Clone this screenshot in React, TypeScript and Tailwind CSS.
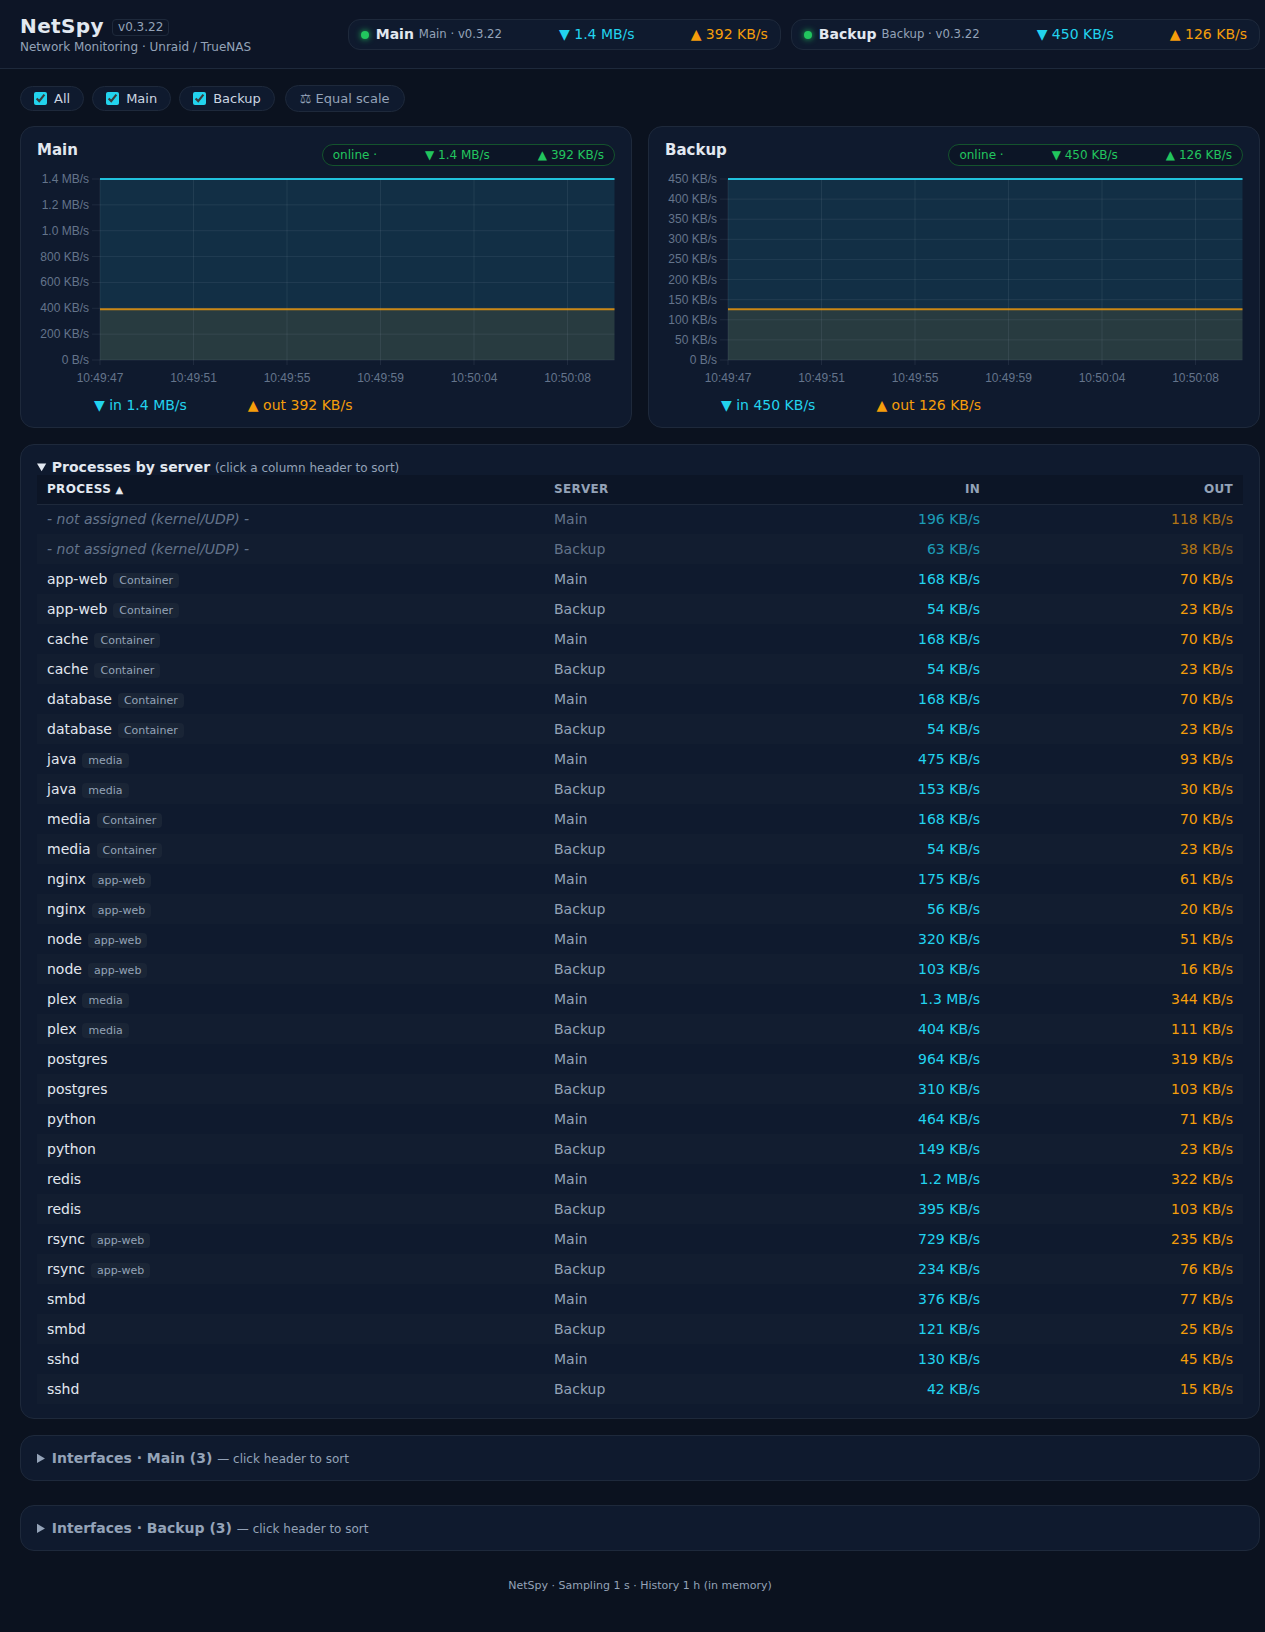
const UI = "font-['DejaVu_Sans',sans-serif]";

type Srv = { name: string; sub: string; dn: string; up: string; yLabels: string[]; legend: string };

const servers: Srv[] = [
  { name: "Main", sub: "Main · v0.3.22", dn: "1.4 MB/s", up: "392 KB/s", legend: "left-[73px]", yLabels: ["1.4 MB/s", "1.2 MB/s", "1.0 MB/s", "800 KB/s", "600 KB/s", "400 KB/s", "200 KB/s", "0 B/s"] },
  { name: "Backup", sub: "Backup · v0.3.22", dn: "450 KB/s", up: "126 KB/s", legend: "left-[72px]", yLabels: ["450 KB/s", "400 KB/s", "350 KB/s", "300 KB/s", "250 KB/s", "200 KB/s", "150 KB/s", "100 KB/s", "50 KB/s", "0 B/s"] },
];

const times = ["10:49:47", "10:49:51", "10:49:55", "10:49:59", "10:50:04", "10:50:08"];

function Chart({ labels }: { labels: string[] }) {
  const l = 79, r = 593.5, t = 52, b = 233;
  const n = labels.length - 1;
  const stepY = (b - t) / n;
  const stepX = 93.5;
  const outY = 182.3;
  return (
    <svg width="611" height="265" className="absolute left-0 top-0" style={{ fontFamily: "'Liberation Sans', sans-serif" }}>
      <rect x={l} y={t} width={r - l} height={outY - t} fill="#122f45" />
      <rect x={l} y={outY} width={r - l} height={b - outY} fill="#283b40" />
      {labels.map((s, i) => (
        <g key={s}>
          <line x1={l - 8} x2={r} y1={t + i * stepY} y2={t + i * stepY} stroke="#94a3b8" strokeOpacity={0.12} />
          <text x={l - 11} y={t + i * stepY + 4} textAnchor="end" fontSize="12" fill="#64748b">{s}</text>
        </g>
      ))}
      {times.map((s, i) => (
        <g key={s}>
          <line x1={l + i * stepX} x2={l + i * stepX} y1={t} y2={b + 5} stroke="#94a3b8" strokeOpacity={0.12} />
          <text x={l + i * stepX} y={b + 22} textAnchor="middle" fontSize="12" fill="#64748b">{s}</text>
        </g>
      ))}
      <line x1={l} x2={r} y1={t} y2={t} stroke="#22d3ee" strokeOpacity={0.9} strokeWidth="2" />
      <line x1={l} x2={r} y1={outY} y2={outY} stroke="#f59e0b" strokeOpacity={0.8} strokeWidth="2" />
    </svg>
  );
}

function ChartCard({ s }: { s: Srv }) {
  return (
    <div className="relative h-[302px] min-w-0 rounded-[14px] border border-[#1e293b] bg-[#0f1a2e]">
      <Chart labels={s.yLabels} />
      <div className="relative flex items-start justify-between pl-4 pr-4 pt-[13px]">
        <div className="text-[15px] font-bold leading-[20px] text-[#e2e8f0]">{s.name}</div>
        <div className="mt-[4px] flex h-[22px] items-center gap-[48px] rounded-full border border-[#14532d] bg-[#0c1526] px-[10px] text-[12px] text-[#22c55e]">
          <span>online ·</span>
          <span>▼ {s.dn}</span>
          <span>▲ {s.up}</span>
        </div>
      </div>
      <div className={`absolute ${s.legend} top-[268px] flex gap-[61px] text-[14px] leading-[20px]`}>
        <span className="text-[#22d3ee]">▼ in {s.dn}</span>
        <span className="text-[#f59e0b]">▲ out {s.up}</span>
      </div>
    </div>
  );
}

function Pill({ s }: { s: Srv }) {
  return (
    <div className="flex h-[31px] items-center gap-[56px] rounded-[12px] border border-[#1e293b] bg-[#0f1a2e] pl-[12px] pr-[12px]">
      <div className="mr-[1px] flex items-center">
        <span className="mr-[7px] h-2 w-2 rounded-full bg-[#22c55e] shadow-[0_0_6px_#22c55e]" />
        <span className="text-[14px] font-bold text-[#e2e8f0]">{s.name}</span>
        <span className="ml-[5px] text-[11.7px] text-[#94a3b8]">{s.sub}</span>
      </div>
      <span className="text-[14px] text-[#22d3ee]">▼ {s.dn}</span>
      <span className="text-[14px] text-[#f59e0b]">▲ {s.up}</span>
    </div>
  );
}

function Chip({ label }: { label: string }) {
  return (
    <label className="flex h-[25px] items-center gap-[7px] rounded-full border border-[#1e293b] bg-[#0f1a2e] px-[13px] text-[13px] text-[#cbd5e1]">
      <input type="checkbox" checked readOnly className="m-0 h-[13px] w-[13px] accent-[#22d3ee]" />
      {label}
    </label>
  );
}

const rows: [string, string | null, string, string, string][] = [];
const add = (n: string, t: string | null, a: string, b: string, c: string, d: string) => {
  rows.push([n, t, "Main", a, b]);
  rows.push([n, t, "Backup", c, d]);
};
add("- not assigned (kernel/UDP) -", null, "196 KB/s", "118 KB/s", "63 KB/s", "38 KB/s");
add("app-web", "Container", "168 KB/s", "70 KB/s", "54 KB/s", "23 KB/s");
add("cache", "Container", "168 KB/s", "70 KB/s", "54 KB/s", "23 KB/s");
add("database", "Container", "168 KB/s", "70 KB/s", "54 KB/s", "23 KB/s");
add("java", "media", "475 KB/s", "93 KB/s", "153 KB/s", "30 KB/s");
add("media", "Container", "168 KB/s", "70 KB/s", "54 KB/s", "23 KB/s");
add("nginx", "app-web", "175 KB/s", "61 KB/s", "56 KB/s", "20 KB/s");
add("node", "app-web", "320 KB/s", "51 KB/s", "103 KB/s", "16 KB/s");
add("plex", "media", "1.3 MB/s", "344 KB/s", "404 KB/s", "111 KB/s");
add("postgres", null, "964 KB/s", "319 KB/s", "310 KB/s", "103 KB/s");
add("python", null, "464 KB/s", "71 KB/s", "149 KB/s", "23 KB/s");
add("redis", null, "1.2 MB/s", "322 KB/s", "395 KB/s", "103 KB/s");
add("rsync", "app-web", "729 KB/s", "235 KB/s", "234 KB/s", "76 KB/s");
add("smbd", null, "376 KB/s", "77 KB/s", "121 KB/s", "25 KB/s");
add("sshd", null, "130 KB/s", "45 KB/s", "42 KB/s", "15 KB/s");

function Collapsed({ title, mb }: { title: string; mb: string }) {
  return (
    <details className={`rounded-[14px] border border-[#1e293b] bg-[#0f1a2e] px-4 pb-[12px] pt-[13px] ${mb}`}>
      <summary className="text-[14px] font-bold leading-[18px] text-[#94a3b8]">
        {title} <span className="text-[12px] font-normal text-[#94a3b8]">— click header to sort</span>
      </summary>
    </details>
  );
}

export default function App() {
  return (
    <div className={`min-h-[1632px] bg-[#0b121f] text-[#e2e8f0] ${UI}`}>
      <header className="flex h-[69px] items-start justify-between border-b border-[#1e293b] bg-[#0d1526] pl-5 pr-[5px] pt-[13px]">
        <div>
          <div className="flex items-center gap-[8px]">
            <span className="text-[20px] font-bold leading-[26px] tracking-[0.4px] text-[#e2e8f0]">NetSpy</span>
            <span className="mt-[2px] rounded-[4px] border border-[#1e293b] px-[5px] text-[12px] leading-[15px] text-[#94a3b8]">v0.3.22</span>
          </div>
          <div className="mt-[1px] text-[12px] leading-[15px] text-[#94a3b8]">Network Monitoring · Unraid / TrueNAS</div>
        </div>
        <div className="mt-[6px] flex gap-[10px]">
          {servers.map((s) => <Pill key={s.name} s={s} />)}
        </div>
      </header>

      <main className="pl-5 pr-[5px]">
        <div className="flex h-[57px] items-center gap-[8px] pt-[2px]">
          <Chip label="All" />
          <Chip label="Main" />
          <Chip label="Backup" />
          <button className="ml-[2px] flex h-[27px] items-center rounded-full border border-[#1e293b] bg-[#0f1a2e] px-[14px] text-[13px] text-[#94a3b8]">⚖ Equal scale</button>
        </div>

        <div className="grid grid-cols-2 gap-4">
          {servers.map((s) => <ChartCard key={s.name} s={s} />)}
        </div>

        <details open className="mt-4 rounded-[14px] border border-[#1e293b] bg-[#0f1a2e] px-4 pb-[14px] pt-[15px]">
          <summary className="text-[14px] font-bold leading-[14px] text-[#e2e8f0]">
            Processes by server <span className="text-[12px] font-normal text-[#94a3b8]">(click a column header to sort)</span>
          </summary>
          <table className="w-full table-fixed border-collapse text-[14px]">
            <thead>
              <tr className="h-[29px] border-b border-[#1e293b] bg-[#0c1526] text-[12px] font-bold tracking-[0.3px]">
                <th className="w-[507px] px-[10px] text-left text-[#e2e8f0]">PROCESS <span className="text-[10px]">▲</span></th>
                <th className="w-[223px] px-[10px] text-left text-[#94a3b8]">SERVER</th>
                <th className="w-[223px] px-[10px] text-right text-[#94a3b8]">IN</th>
                <th className="px-[10px] text-right text-[#94a3b8]">OUT</th>
              </tr>
            </thead>
            <tbody>
              {rows.map((r, i) => {
                const dim = i < 2;
                return (
                  <tr key={i} className={`h-[30px] ${i % 2 ? "bg-[#121d30]" : ""}`}>
                    <td className="px-[10px]">
                      {dim ? (
                        <span className="italic text-[#64748b]">{r[0]}</span>
                      ) : (
                        <>
                          <span className="text-[#e2e8f0]">{r[0]}</span>
                          {r[1] && <span className="ml-[6px] rounded-[4px] bg-[#1a2536] px-[6px] py-[1px] text-[11px] text-[#94a3b8]">{r[1]}</span>}
                        </>
                      )}
                    </td>
                    <td className={`px-[10px] ${dim ? "text-[#64748b]" : "text-[#94a3b8]"}`}>{r[2]}</td>
                    <td className={`px-[10px] text-right text-[#22d3ee] ${dim ? "opacity-70" : ""}`}>{r[3]}</td>
                    <td className={`px-[10px] text-right text-[#f59e0b] ${dim ? "opacity-70" : ""}`}>{r[4]}</td>
                  </tr>
                );
              })}
            </tbody>
          </table>
        </details>

        <div className="mt-4">
          <Collapsed title="Interfaces · Main (3)" mb="mb-[24px]" />
          <Collapsed title="Interfaces · Backup (3)" mb="" />
        </div>

        <div className="mt-[28px] text-center text-[11px] leading-[14px] text-[#94a3b8]">NetSpy · Sampling 1 s · History 1 h (in memory)</div>
      </main>
    </div>
  );
}
